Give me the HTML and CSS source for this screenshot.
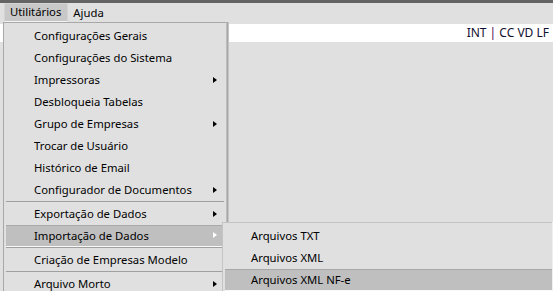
FILE: index.html
```html
<!DOCTYPE html>
<html lang="pt-BR">
<head>
  <meta charset="UTF-8" />
  <title>Utilitários</title>
  <link rel="stylesheet" href="styles.css">
</head>
<body>
  <div class="topline"></div>
  <div class="menubar">
    <span class="menubar-item open">Utilitários</span>
    <span class="menubar-item">Ajuda</span>
  </div>
  <div class="status">INT <span class="pipe">|</span> CC VD LF</div>

  <div class="menu main">
    <div class="item">Configurações Gerais</div>
    <div class="item">Configurações do Sistema</div>
    <div class="item sub">Impressoras</div>
    <div class="item">Desbloqueia Tabelas</div>
    <div class="item sub">Grupo de Empresas</div>
    <div class="item">Trocar de Usuário</div>
    <div class="item">Histórico de Email</div>
    <div class="item sub">Configurador de Documentos</div>
    <div class="sep"></div>
    <div class="item sub">Exportação de Dados</div>
    <div class="item sub active">Importação de Dados</div>
    <div class="sep"></div>
    <div class="item">Criação de Empresas Modelo</div>
    <div class="sep"></div>
    <div class="item sub">Arquivo Morto</div>
  </div>

  <div class="menu submenu">
    <div class="item">Arquivos TXT</div>
    <div class="item">Arquivos XML</div>
    <div class="item active">Arquivos XML NF-e</div>
  </div>
</body>
</html>
```

FILE: styles.css
```css
* {
  margin: 0;
  padding: 0;
  box-sizing: border-box;
}
html, body {
  height: 100%;
  overflow: hidden;
}
body {
  font-family: 'Noto Sans', 'Open Sans', sans-serif;
  font-size: 11.3px;
  color: #000;
  background: #e0e0e0;
  position: relative;
}
.topline {
  height: 3px;
  background: #646464;
}
.menubar {
  height: 21px;
  display: flex;
  align-items: stretch;
  padding-left: 4px;
}
.menubar-item {
  display: flex;
  align-items: center;
  padding: 0 5px 1px 5px;
  line-height: 18px;
}
.menubar-item.open {
  background: #c8c8c8;
  border: 1px solid #d4d4d4;
  border-bottom-color: #f4f4f4;
  height: 19px;
  padding-left: 5px;
  padding-right: 6px;
}
.status {
  height: 18px;
  background: #fff;
  text-align: right;
  padding-right: 4px;
  line-height: 18px;
  font-size: 12px;
  color: #101030;
}
.status .pipe {
  color: #500050;
}

.menu {
  position: absolute;
  background: #e0e0e0;
  border-top: 1px solid #a8a8a8;
  border-left: 1px solid #a8a8a8;
}
.menu.main {
  left: 3px;
  top: 22px;
  width: 223px;
  padding: 2px 0 0 2px;
  box-shadow: 1px 0 0 #bcbcbc, 2px 0 0 #a8a8a8, 3px 0 0 #c4c4c4;
}
.menu.submenu {
  left: 222px;
  top: 222px;
  right: 1px;
  padding: 2px 0 0 2px;
  border-color: #c4c4c4;
  box-shadow: 1px 0 0 #f0f0f0;
}
.item {
  height: 22px;
  line-height: 22px;
  padding-left: 28px;
  position: relative;
  white-space: nowrap;
}
.menu.submenu .item {
  padding-left: 26px;
}
.item.sub::after {
  content: "";
  position: absolute;
  right: 9px;
  top: 8px;
  border-left: 4px solid #000;
  border-top: 3.5px solid transparent;
  border-bottom: 3.5px solid transparent;
}
.item.active {
  background: #bfbfbf;
  border-top: 1px solid #a8a8a8;
  border-bottom: 1px solid #f8f8f8;
  line-height: 20px;
}
.item.active.sub::after {
  top: 6px;
  border-left-color: #fff;
}
.sep {
  height: 2px;
  margin: 0 2px 0 0;
  border-top: 1px solid #a0a0a0;
}
```
